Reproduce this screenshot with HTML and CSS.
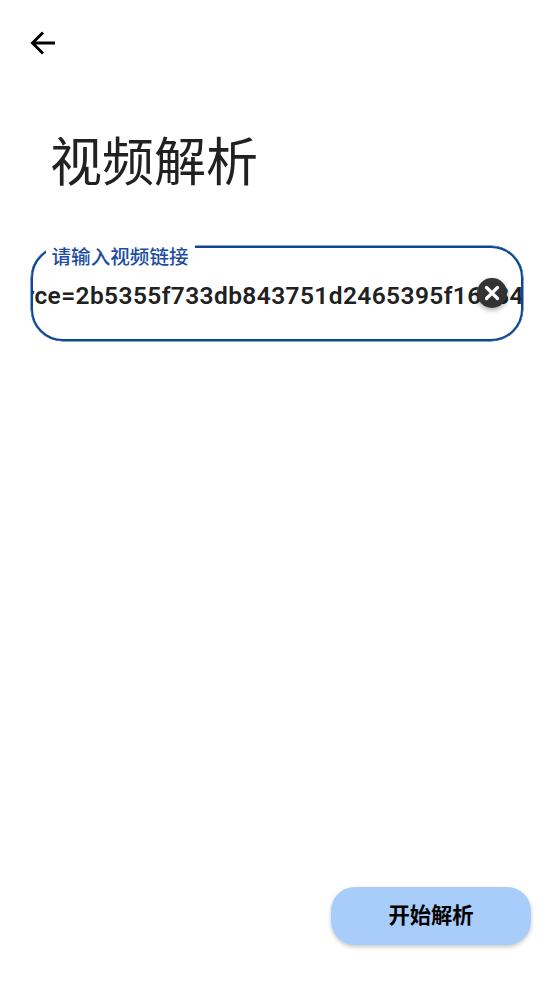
FILE: index.html
```html
<!DOCTYPE html>
<html lang="zh">
<head>
<meta charset="utf-8">
<title>视频解析</title>
<link rel="stylesheet" href="styles.css">
</head>
<body>
<main class="page">
  <header class="topbar">
    <svg class="back" viewBox="0 0 28 28" width="28" height="28" aria-hidden="true"><path d="M26 14H4M14 3.5 3.5 14 14 24.5" fill="none" stroke="#000" stroke-width="2.9"/></svg>
  </header>
  <h1 class="title">视频解析</h1>
  <section class="field">
    <span class="label">请输入视频链接</span>
    <div class="value"><span>aid=1&amp;source=2b5355f733db843751d2465395f16e84</span></div>
    <span class="clear">
      <svg viewBox="0 0 16 16" width="16" height="16" aria-hidden="true"><path d="M2.5 2.5 13.5 13.5M13.5 2.5 2.5 13.5" stroke="#fff" stroke-width="3.2" stroke-linecap="round"/></svg>
    </span>
  </section>
  <footer class="actions">
    <button class="start">开始解析</button>
  </footer>
</main>
</body>
</html>
```
FILE: styles.css
```css
* { box-sizing: border-box; }
html, body { margin: 0; padding: 0; background: #fff; }
.page {
  width: 554px;
  height: 984px;
  display: flex;
  flex-direction: column;
  font-family: Roboto, "Noto Sans CJK SC", sans-serif;
  overflow: hidden;
}
.topbar { padding: 29px 0 0 29px; height: 57px; }
.back { display: block; }
.title {
  margin: 73px 0 0 50px;
  font-size: 52px;
  line-height: 68px;
  font-weight: 400;
  color: #212121;
}
.field {
  position: relative;
  margin: 48px 0 0 31px;
  width: 492px;
  height: 95px;
  border: 2px solid #0d4794;
  border-radius: 32px;
  box-shadow: 0 0 0 .5px #0d4794;
}
.label {
  position: absolute;
  left: 12.5px;
  top: -3.5px;
  padding: 1px 6px 0;
  background: #fff;
  color: #1c4da0;
  font-size: 19.6px;
  line-height: 24px;
  font-weight: 500;
}
.value {
  display: flex;
  justify-content: flex-end;
  height: 100%;
  overflow: hidden;
  padding-top: 33px;
  font-size: 24.5px;
  letter-spacing: .4px;
  line-height: 30px;
  font-weight: 600;
  color: #212121;
  white-space: nowrap;
}
.value span { flex: none; margin-right: -3px; }
.clear {
  position: absolute;
  left: 443.5px;
  top: 29.5px;
  width: 30px;
  height: 30px;
  border-radius: 50%;
  background: #333;
  box-shadow: 0 2px 5px rgba(0,0,0,.35);
  display: flex;
  align-items: center;
  justify-content: center;
}
.actions {
  margin-top: auto;
  padding: 0 23px 39px 0;
  display: flex;
  justify-content: flex-end;
}
.start {
  width: 200px;
  height: 58px;
  padding: 0 0 5px;
  border: 0;
  border-radius: 24px;
  background: #a8cdfa;
  box-shadow: 0 2px 4px rgba(0,0,0,.22);
  color: #000;
  font-family: inherit;
  font-size: 21.3px;
  font-weight: 700;
}
```
